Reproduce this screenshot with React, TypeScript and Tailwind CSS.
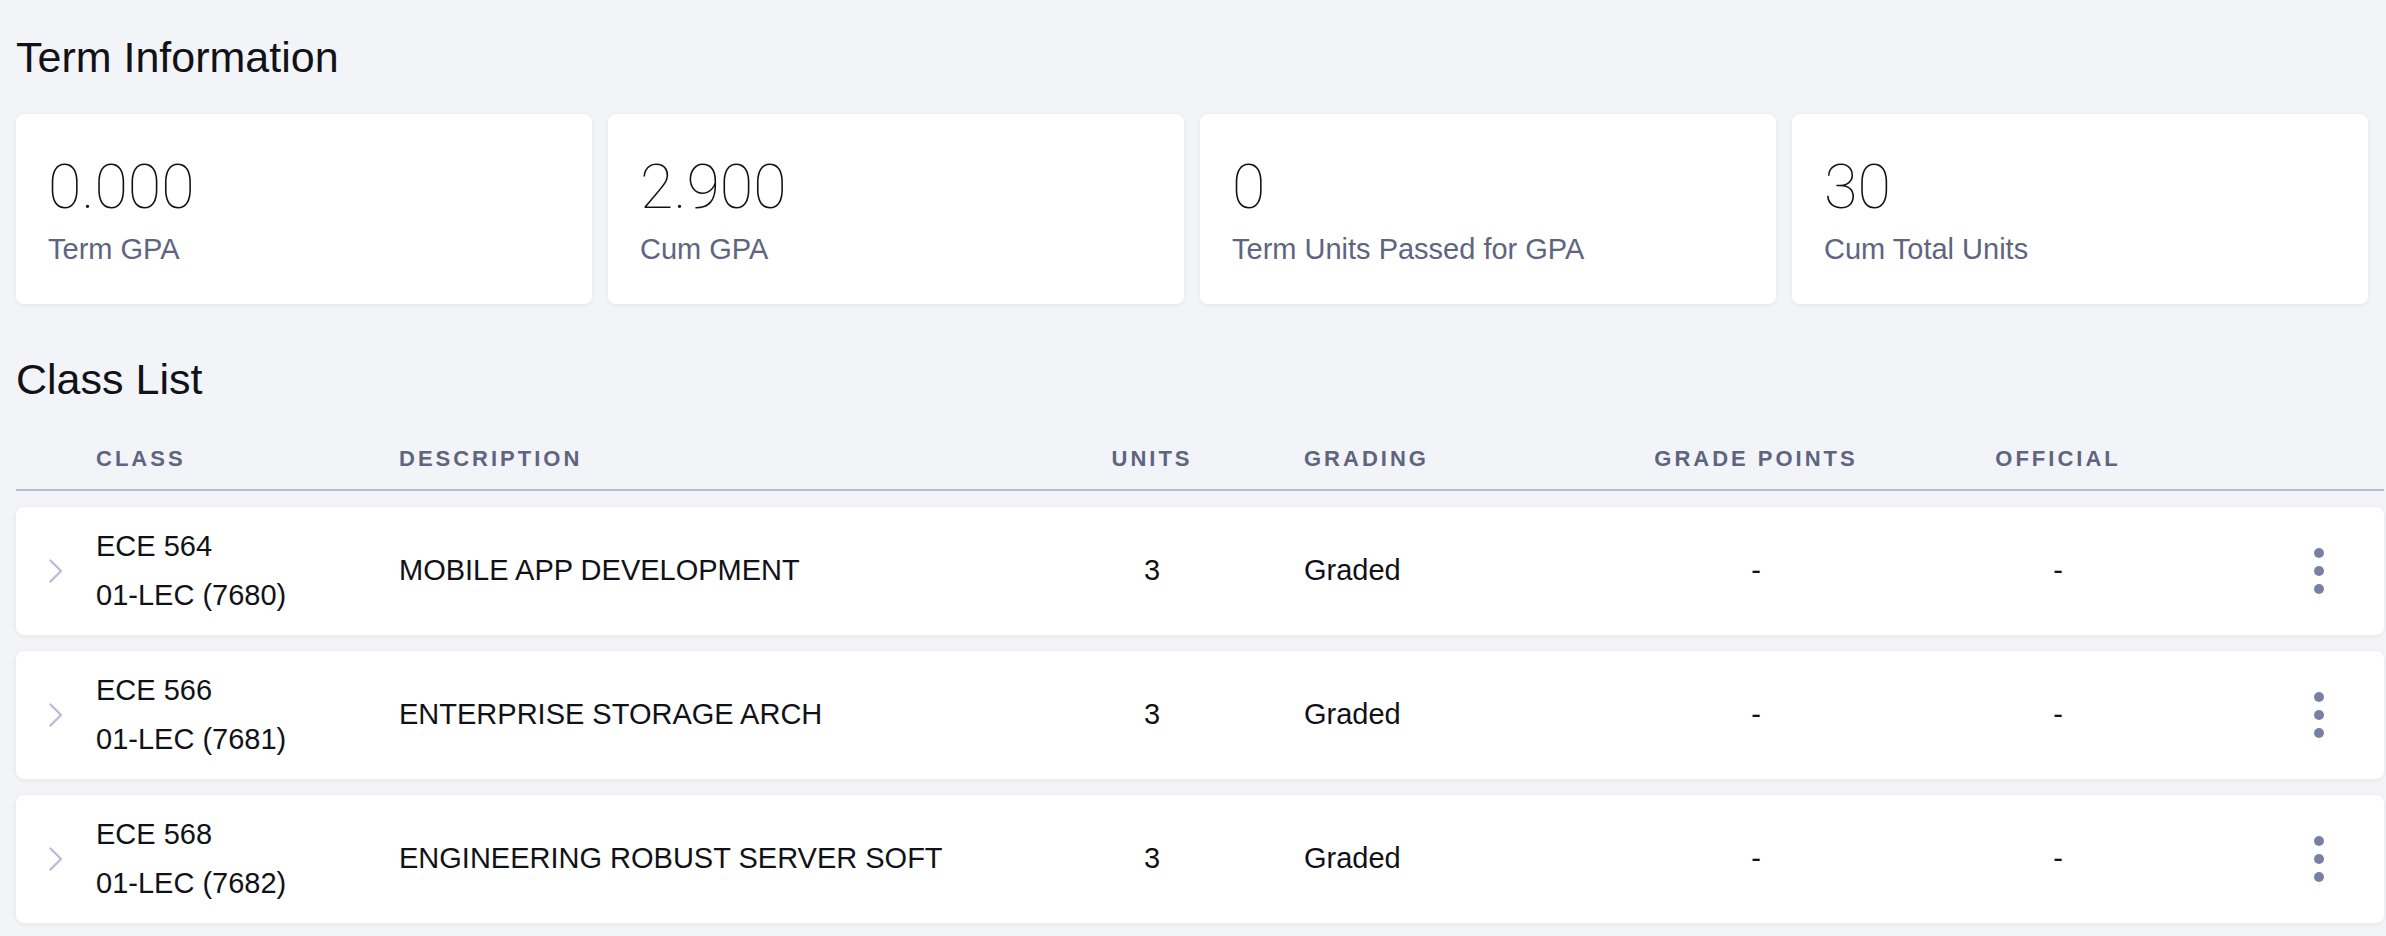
const STATS = [
  { value: "0.000", label: "Term GPA" },
  { value: "2.900", label: "Cum GPA" },
  { value: "0", label: "Term Units Passed for GPA" },
  { value: "30", label: "Cum Total Units" },
];

const CLASSES = [
  { code: "ECE 564", section: "01-LEC (7680)", desc: "MOBILE APP DEVELOPMENT" },
  { code: "ECE 566", section: "01-LEC (7681)", desc: "ENTERPRISE STORAGE ARCH" },
  { code: "ECE 568", section: "01-LEC (7682)", desc: "ENGINEERING ROBUST SERVER SOFT" },
];

const COLS =
  "grid grid-cols-[80px_303px_601px_304px_312px_280px_324px_164px] items-center";

const StatCard = ({ value, label }: { value: string; label: string }) => (
  <div className="rounded-lg bg-white px-8 pt-[43px] pb-[39px] shadow-[0_1px_4px_rgba(40,50,90,0.08)]">
    <div className="font-['Roboto',sans-serif] text-[61px] leading-[60px] font-thin text-[#111218]">
      {value}
    </div>
    <div className="mt-4 text-[29px] leading-[32px] text-[#5e6580]">{label}</div>
  </div>
);

const Chevron = () => (
  <svg width="16" height="24" viewBox="0 0 16 24" fill="none">
    <polyline
      points="2.5,1.5 13,12 2.5,22.5"
      stroke="#b8bdd5"
      strokeWidth="2.4"
      strokeLinecap="round"
      strokeLinejoin="round"
    />
  </svg>
);

const Kebab = () => (
  <div className="flex flex-col items-center gap-[8px]">
    <span className="h-[10px] w-[10px] rounded-full bg-[#7880a6]" />
    <span className="h-[10px] w-[10px] rounded-full bg-[#7880a6]" />
    <span className="h-[10px] w-[10px] rounded-full bg-[#7880a6]" />
  </div>
);

const App = () => {
  return (
    <div className="min-h-screen bg-[#f3f4f8] pl-4 pr-[2px] pt-[31px] font-['Liberation_Sans',Arial,sans-serif] text-[#111218]">
      {/* Term Information */}
      <h1 className="text-[43px] leading-[52px]">Term Information</h1>
      <div className="mt-[31px] mr-[16px] grid grid-cols-4 gap-4">
        {STATS.map((s) => (
          <StatCard key={s.label} value={s.value} label={s.label} />
        ))}
      </div>

      {/* Class List */}
      <h2 className="mt-[49px] text-[43px] leading-[52px]">Class List</h2>
      <div
        className={`${COLS} mt-[40px] border-b-2 border-[#b7bccf] pb-4 text-[22px] leading-[28px] font-bold tracking-[3px] text-[#5e6580]`}
      >
        <div />
        <div>CLASS</div>
        <div>DESCRIPTION</div>
        <div className="text-center">UNITS</div>
        <div>GRADING</div>
        <div className="text-center">GRADE POINTS</div>
        <div className="text-center">OFFICIAL</div>
        <div />
      </div>

      <div className="mt-4 flex flex-col gap-4">
        {CLASSES.map((c) => (
          <div
            key={c.code}
            className={`${COLS} h-[128px] rounded-lg bg-white text-[29px] shadow-[0_1px_4px_rgba(40,50,90,0.08)]`}
          >
            <div className="flex justify-center">
              <Chevron />
            </div>
            <div className="leading-[49px]">
              <div>{c.code}</div>
              <div>{c.section}</div>
            </div>
            <div>{c.desc}</div>
            <div className="text-center">3</div>
            <div>Graded</div>
            <div className="text-center">-</div>
            <div className="text-center">-</div>
            <div className="flex justify-end pr-[60px]">
              <Kebab />
            </div>
          </div>
        ))}
      </div>
    </div>
  );
};

export default App;
